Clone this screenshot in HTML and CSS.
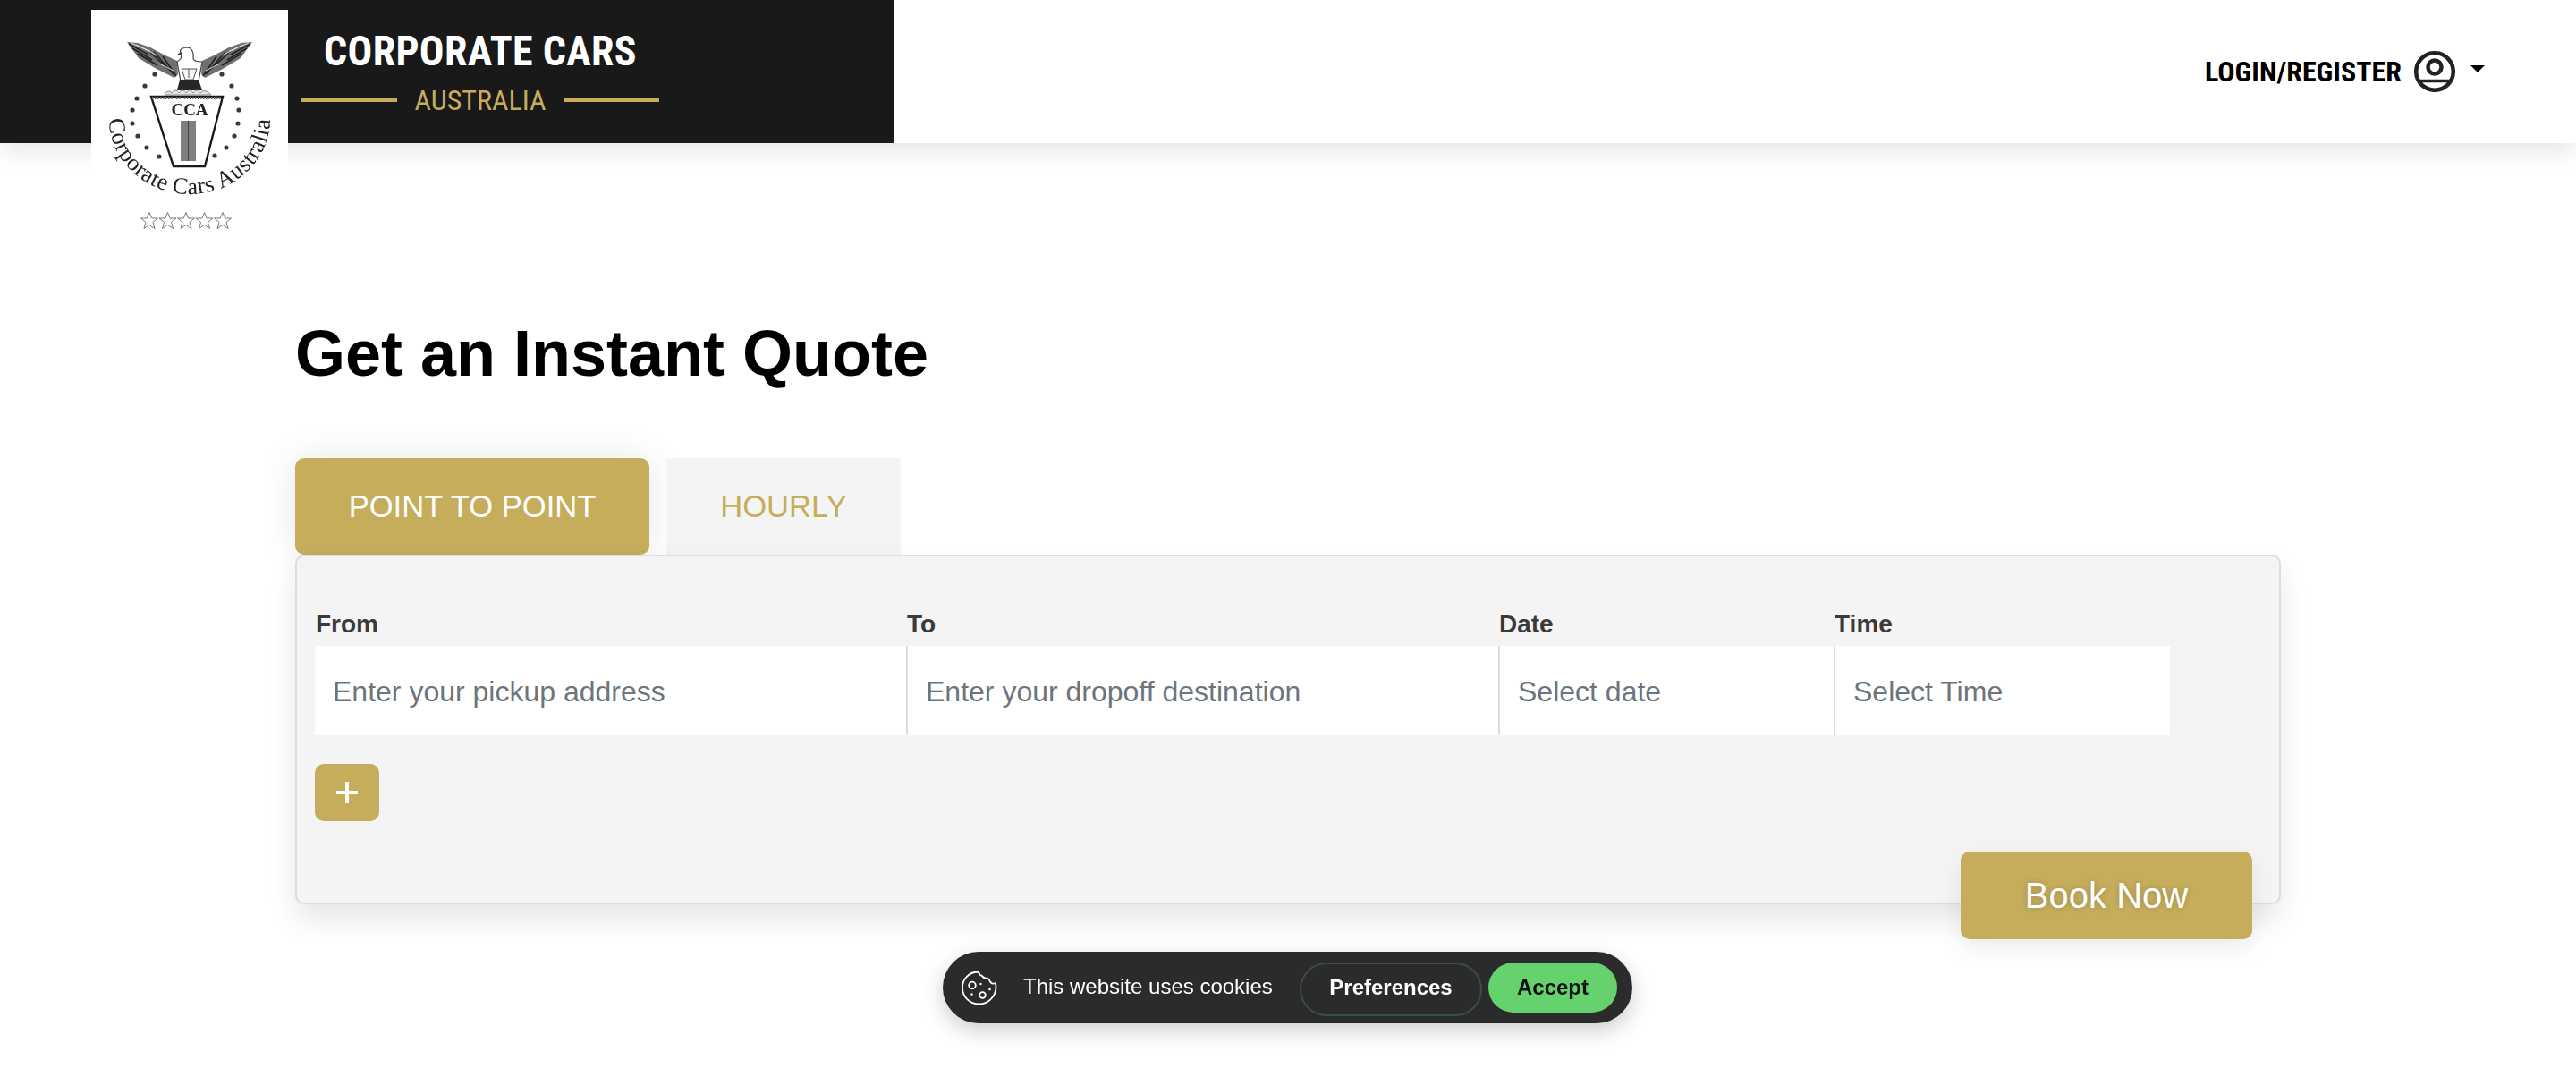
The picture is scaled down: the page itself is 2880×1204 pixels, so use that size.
FILE: index.html
```html
<!DOCTYPE html>
<html lang="en">
<head>
<meta charset="utf-8">
<title>Corporate Cars Australia</title>
<link rel="stylesheet" href="styles.css">
</head>
<body>
<header class="site-header">
  <div class="brand">
    <a class="logo" href="#" aria-label="Corporate Cars Australia">
      <svg class="logo-art" viewBox="0 0 220 260" width="220" height="260">
        <defs>
          <g id="wing">
            <path d="M40 36 L52 37 L66 42 L83 51 L96 57 L97 72 L93 76 L73 66 L53 54 Z" fill="#6f6f6f"/>
            <path d="M42 38 L64 50 M46 43 L68 56 M52 49 L74 62 M62 44 L86 66 M70 47 L92 72 M80 52 L95 74" stroke="#222" stroke-width="1.600" fill="none"/>
            <path d="M44 37 L66 46 M50 39 L74 51 M76 60 L92 68" stroke="#e0e0e0" stroke-width="1" fill="none"/>
          </g>
          <path id="logo-arc" d="M20 122 A90 84 0 0 0 200 122"/>
          <path id="star" d="M0 -9.5 L2.6 -3 L9.500 -3 L4 1.400 L6 8.500 L0 4.400 L-6 8.500 L-4 1.400 L-9.500 -3 L-2.600 -3 Z" fill="#fff" stroke="#777" stroke-width="1"/>
        </defs>
        <use href="#wing"/>
        <use href="#wing" transform="translate(220 0) scale(-1 1)"/>
        <path d="M96 58 C100 56 102 53 100 48 C98 44 103 42 108 42 C113 43 115 49 114 54 C114 57 119 58 124 58 L120 80 L100 80 Z" fill="#fff" stroke="#444" stroke-width="1.200"/>
        <path d="M101 66 H118 L114 78 H105 Z" fill="#f4f4f4" stroke="#555" stroke-width="1"/>
        <path d="M109 66 V76" stroke="#555" stroke-width="1"/>
        <path d="M101 48 L97 50" stroke="#333" stroke-width="1.500"/>
        <path d="M99 78 L120 78 L124 90 L96 90 Z" fill="#262626"/>
        <path d="M82 95 C84 90 88 90 90 93 C92 89 96 89 98 93 C100 89 104 89 106 93 C108 89 112 89 114 93 C116 89 120 89 122 93 C124 89 130 90 134 95 Z" fill="#e4e4e4" stroke="#888" stroke-width="1"/>
        <g fill="#3a3a3a">
          <circle cx="71" cy="72" r="2.600"/><circle cx="60" cy="85" r="2.600"/><circle cx="51" cy="99" r="2.600"/><circle cx="46" cy="112" r="2.600"/><circle cx="46" cy="127" r="2.600"/><circle cx="52" cy="141" r="2.600"/><circle cx="62" cy="154" r="2.600"/><circle cx="76" cy="164" r="2.600"/>
          <circle cx="146" cy="72" r="2.600"/><circle cx="157" cy="85" r="2.600"/><circle cx="163" cy="99" r="2.600"/><circle cx="165" cy="112" r="2.600"/><circle cx="164" cy="127" r="2.600"/><circle cx="160" cy="141" r="2.600"/><circle cx="151" cy="154" r="2.600"/><circle cx="138" cy="163" r="2.600"/>
        </g>
        <path d="M67 97 L147 97 L127 175 L92 175 Z" fill="#fff" stroke="#1b1b1b" stroke-width="2.400"/>
        <path d="M68 98.500 H146" stroke="#666" stroke-width="3" stroke-dasharray="1.500 1.500"/>
        <text class="logo-mark" x="110" y="118" text-anchor="middle">CCA</text>
        <rect x="100" y="124" width="17" height="45" fill="#7f7f7f"/>
        <path d="M108.500 124 V169" stroke="#444" stroke-width="1"/>
        <text class="logo-ring"><textPath href="#logo-arc" startOffset="0" textLength="272" lengthAdjust="spacing">Corporate Cars Australia</textPath></text>
        <g>
          <use href="#star" x="65" y="236"/><use href="#star" x="85.500" y="236"/><use href="#star" x="106" y="236"/><use href="#star" x="126.500" y="236"/><use href="#star" x="147" y="236"/>
        </g>
      </svg>
    </a>
    <div class="brand-text">
      <div class="brand-name">CORPORATE CARS</div>
      <div class="brand-sub"><span class="rule"></span><span>AUSTRALIA</span><span class="rule"></span></div>
    </div>
  </div>
  <a class="account" href="#">
    <span>LOGIN/REGISTER</span>
    <svg class="account-icon" viewBox="0 0 46 46" width="46" height="46" fill="none" stroke="#222" stroke-width="4.500">
      <circle cx="23" cy="23" r="20.800"/>
      <circle cx="23" cy="18" r="7.500"/>
      <path d="M6 33.500 H40" stroke-width="3.500"/>
    </svg>
    <span class="caret"></span>
  </a>
</header>

<main class="content">
  <h1 class="title">Get an Instant Quote</h1>
  <div class="tabs">
    <button class="tab tab-active" type="button">POINT TO POINT</button>
    <button class="tab tab-idle" type="button">HOURLY</button>
  </div>
  <form class="panel">
    <div class="fields">
      <div class="field"><label class="field-label" for="from">From</label><input class="field-input field-first" id="from" placeholder="Enter your pickup address"></div>
      <div class="field"><label class="field-label" for="to">To</label><input class="field-input" id="to" placeholder="Enter your dropoff destination"></div>
      <div class="field"><label class="field-label" for="date">Date</label><input class="field-input" id="date" placeholder="Select date"></div>
      <div class="field"><label class="field-label" for="time">Time</label><input class="field-input" id="time" placeholder="Select Time"></div>
    </div>
    <button class="add-stop" type="button" aria-label="Add stop"><span class="plus"></span></button>
    <button class="book" type="button">Book Now</button>
  </form>
</main>

<aside class="cookie">
  <svg class="cookie-icon" viewBox="0 0 44 44" width="44" height="44" fill="none" stroke="#fff" stroke-width="1.800" stroke-linejoin="round">
    <path d="M21 5.500 C10.500 5.500 3 13.500 3 23 C3 33.500 11 41.500 21.500 41.500 C32 41.500 40.500 33 40.500 22.300 C40.500 20.500 40 19 40 18 C37.500 19 35 18.500 34 16.500 C33 14.500 32.500 13 31 12.500 C28 13 26 12 25 10 C23 9.500 21.500 8 21 5.500 Z"/>
    <circle cx="14" cy="20.500" r="3.800"/>
    <circle cx="25.500" cy="31.500" r="3.300"/>
    <circle cx="23.500" cy="19" r="1.200" fill="#fff" stroke="none"/>
    <circle cx="13.500" cy="30.500" r="1.300" fill="#fff" stroke="none"/>
    <circle cx="33.500" cy="25" r="1.300" fill="#fff" stroke="none"/>
  </svg>
  <span class="cookie-text">This website uses cookies</span>
  <button class="cookie-pref" type="button">Preferences</button>
  <button class="cookie-accept" type="button">Accept</button>
</aside>
</body>
</html>
```
FILE: styles.css
```css
* { box-sizing: border-box; }
html, body { margin: 0; padding: 0; }
body {
  background: #fff;
  color: #000;
  font-family: "Liberation Sans", Arial, sans-serif;
  min-height: 1204px;
}
button { font-family: inherit; border: 0; cursor: pointer; }

.site-header {
  display: flex;
  justify-content: space-between;
  align-items: center;
  height: 160px;
  background: #fff;
  box-shadow: 0 6px 28px rgba(0, 0, 0, 0.12);
  position: relative;
  z-index: 2;
}
.brand {
  display: flex;
  align-items: flex-start;
  gap: 15px;
  width: 1000px;
  height: 160px;
  padding-left: 102px;
  background: #191919;
}
.logo {
  display: block;
  flex: none;
  width: 220px;
  height: 260px;
  margin-top: 11px;
  background: #fff;
}
.logo-art { display: block; filter: blur(0.6px); }
.logo-mark { font: 700 19px "Liberation Serif", serif; fill: #222; }
.logo-ring { font: 400 26px "Liberation Serif", serif; fill: #222; }
.brand-text {
  display: flex;
  flex-direction: column;
  align-items: center;
  width: 400px;
  padding-top: 30px;
  font-family: Roboto, sans-serif;
  font-stretch: 75%;
}
.brand-name {
  color: #fff;
  font-size: 46px;
  line-height: 54px;
  font-weight: 700;
  letter-spacing: 0.3px;
}
.brand-sub {
  display: flex;
  align-items: center;
  gap: 20px;
  margin-top: 8px;
  color: #c5ad5c;
  font-size: 32px;
  line-height: 40px;
}
.rule { display: block; width: 107px; height: 4px; background: #c5ad5c; }

.account {
  display: flex;
  align-items: center;
  margin-right: 102px;
  color: #000;
  font-family: Roboto, sans-serif;
  font-stretch: 75%;
  font-size: 32px;
  font-weight: 700;
  text-decoration: none;
}
.account-icon { margin-left: 14px; }
.caret {
  width: 0;
  height: 0;
  margin-left: 17px;
  margin-bottom: 6px;
  border: 8px solid transparent;
  border-top-color: #000;
  border-bottom: 0;
}

.content { padding: 192px 330px 0; }
.title {
  margin: 0 0 74px;
  font-size: 72px;
  line-height: 86px;
  font-weight: 700;
}
.tabs { display: flex; gap: 19px; height: 108px; }
.tab {
  height: 108px;
  padding: 0;
  font-size: 34.6px;
}
.tab-active {
  width: 396px;
  color: #fff;
  background: #c5ad5c;
  border-radius: 10px;
  box-shadow: 0 0 40px rgba(0, 0, 0, 0.1);
}
.tab-idle { width: 262px; color: #c5ad5c; background: #f4f4f4; }
.panel {
  display: flex;
  flex-direction: column;
  align-items: flex-start;
  position: relative;
  width: 2220px;
  height: 391px;
  padding: 56px 30px 0 20px;
  background: #f4f4f4;
  border: 2px solid #ddd;
  border-radius: 10px;
  box-shadow: 0 16px 32px rgba(0, 0, 0, 0.1);
}
.fields {
  display: grid;
  flex: none;
  grid-template-columns: 661px 662px 375px 376px;
}
.field-label {
  display: block;
  margin-bottom: 4px;
  padding-left: 1px;
  color: #3a3a3a;
  font-size: 28px;
  line-height: 40px;
  font-weight: 700;
}
.field-input {
  display: block;
  width: 100%;
  height: 100px;
  padding: 2px 20px 0;
  color: #333;
  background: #fff;
  border: 0;
  border-left: 2px solid #ddd;
  border-radius: 0;
  outline: 0;
  font-family: inherit;
  font-size: 32px;
}
.field-first { border-left: 0; }
.field-input::placeholder { color: #6c757d; opacity: 1; }
.add-stop {
  display: flex;
  flex: none;
  align-items: center;
  justify-content: center;
  width: 72px;
  height: 64px;
  margin-top: 32px;
  padding: 0;
  background: #c5ad5c;
  border-radius: 10px;
}
.plus {
  display: block;
  width: 24px;
  height: 24px;
  background:
    linear-gradient(#fff, #fff) center / 24px 4px no-repeat,
    linear-gradient(#fff, #fff) center / 4px 24px no-repeat;
}
.book {
  align-self: flex-end;
  flex: none;
  width: 326px;
  height: 98px;
  margin-top: 34px;
  color: #fff;
  background: #c5ad5c;
  border-radius: 10px;
  font-size: 40px;
  text-shadow: 0 0 6px rgba(0, 0, 0, 0.2);
  box-shadow: 0 10px 28px rgba(0, 0, 0, 0.08);
}

.cookie {
  position: fixed;
  left: 1054px;
  bottom: 60px;
  z-index: 3;
  display: flex;
  align-items: flex-start;
  width: 771px;
  height: 80px;
  padding: 12px 16px 0 19px;
  background: #2b2b2b;
  border-radius: 40px;
  box-shadow: 0 8px 24px rgba(0, 0, 0, 0.2);
}
.cookie-icon { flex: none; margin-top: 5px; }
.cookie-text {
  margin-left: 27px;
  width: 309px;
  color: #fff;
  font-size: 24px;
  line-height: 54px;
}
.cookie-pref {
  width: 204px;
  height: 60px;
  padding: 0 0 4px;
  color: #fff;
  background: transparent;
  border: 2px solid #39503a;
  border-radius: 30px;
  font-size: 24px;
  font-weight: 700;
}
.cookie-accept {
  width: 144px;
  height: 56px;
  margin-left: 7px;
  padding: 0;
  color: #111;
  background: #65d26e;
  border-radius: 28px;
  font-size: 24px;
  font-weight: 700;
}
```
